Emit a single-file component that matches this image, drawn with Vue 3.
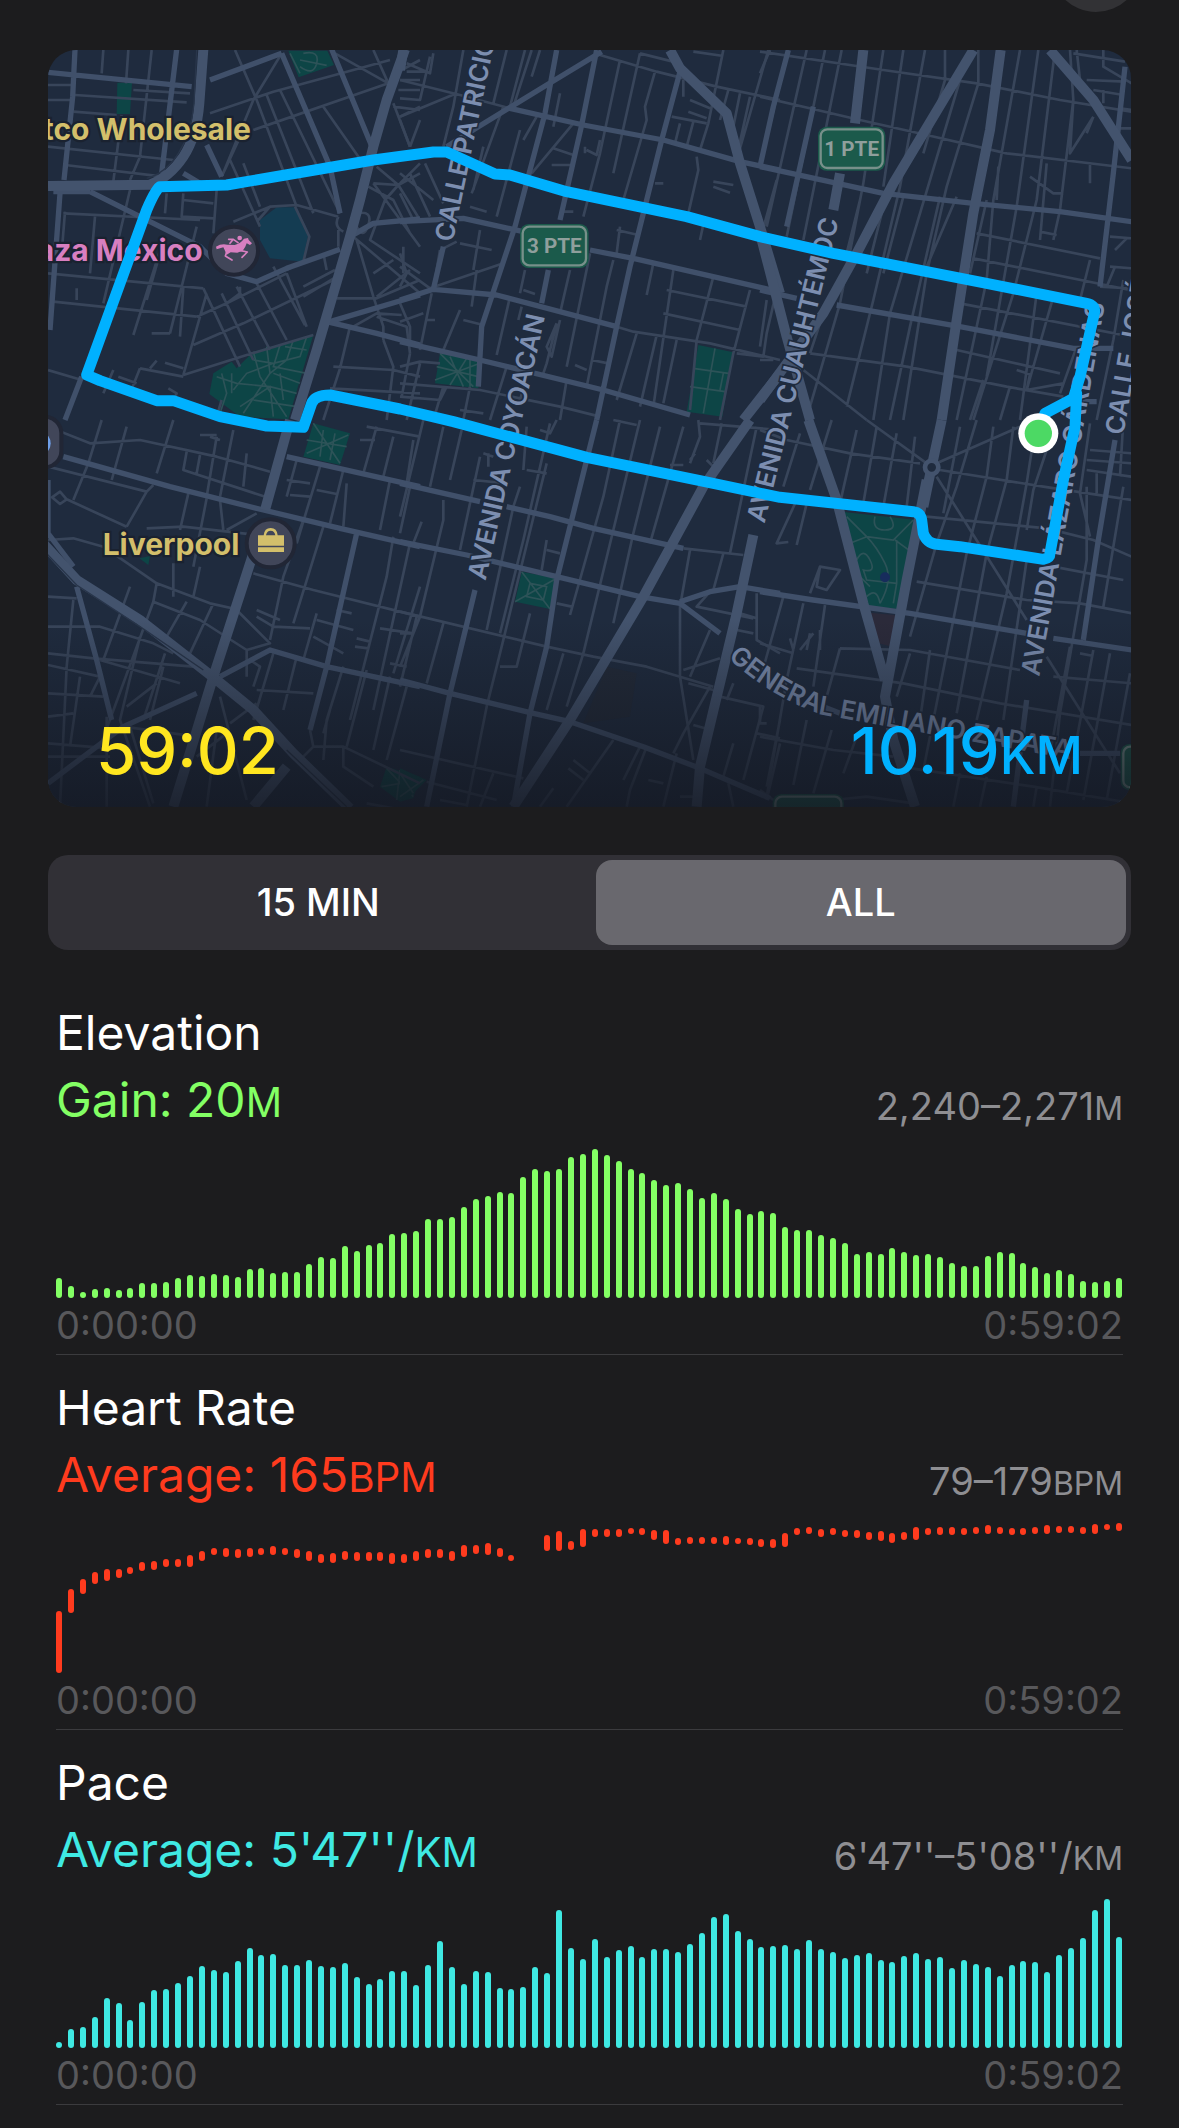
<script setup>
import { ref } from 'vue'

const spans = ['15 MIN', 'ALL']
const activeSpan = ref('ALL')

/* Map tiles: road and park outlines, each in its own tile coordinates. */
const tiles = [
  {
    x: 120, y: 120,
    parks: 'M232 128H276L270 222H230ZM745 32H862L882 75L776 112ZM520 1000L575 965L590 985L640 935L820 885L745 1138L600 1130L508 1062Z',
    paths: 'M750 40L780 100M790 40Q840 30 830 70T780 80M860 76L780 60M640 935L660 1010L740 1130M680 920L690 1000L650 1060L610 1120M720 915L700 980L800 1000M760 900L740 960L690 1000M800 890L780 950L700 970M530 1010L590 1030L690 1040L770 1060M545 1000L560 1060L540 1120M575 1000V1060M600 1100L690 1040L700 1130M640 1080L770 1100M700 970L640 960M700 1000L780 1030M580 1050L620 1000L700 970M735 920L800 930M720 1000L730 1080',
    minor: 'M190 30L185 100M265 30L258 130M335 30L300 350L270 420M245 225L220 425M24 135H95M24 180H95M105 165L440 187M100 215L230 225M280 150L450 160M24 320L400 360M75 375L370 410M585 30L650 180L770 500M510 220L700 155L1050 60M640 270L1045 130M725 40L640 180L545 410M885 40L1045 130M1000 30L1045 130M680 165L820 520M720 150L900 520M850 200L990 400M610 370L660 500M545 410L610 270M570 360L660 560M655 540L690 500L770 495L895 530M690 500L580 545M765 500L808 590L790 665L740 690M895 570V620M70 520L480 540M75 515L65 640M165 530L150 700M24 700L490 745M40 785L470 830M270 450L190 790M370 600L280 885M470 560L390 880M430 740L420 890M530 450L520 580M380 460L375 520M430 460L425 530L520 535M430 480L520 490M360 640L320 780M110 745V780M470 830L560 790L740 700M490 745L600 980M545 760L640 960M590 740L690 930M650 730L740 900M700 680L795 855M430 1005L620 945L820 885M430 1005L500 760M460 915L610 850L880 720M24 990L125 1020M300 985L430 1010M300 985L270 1060M235 1010L290 1030M335 880H390M330 985L350 962M375 968L430 985M385 1045L410 1060L400 1085M600 740V760L560 790M740 700L800 860M790 770L890 710M790 740L885 690M890 775H1010L1140 720M850 640L860 690M1000 430L1075 435L1140 400M1075 435L1035 480L990 600L1140 700M985 440L1060 480L1110 580M1000 430L1140 620M940 590L1140 760M950 600L1000 770L1030 860L1030 900M1060 660L1000 700M1110 690L1010 770M1010 380L1075 435L1140 540M1090 620V700M1140 60L1085 90M1080 120H1140M1075 150H1140M1060 200L1140 210M1060 190L1110 320M1110 320L1140 240M1140 200L1080 230M930 860L900 985L850 1140M1030 900L1060 980L1040 1140M1110 940L1085 1070M880 980L1060 990L1140 1010M870 1045L1140 1060M1010 830L1100 860L1110 940M940 860L1010 820L1085 825M895 530Q880 560 910 575M950 520Q1000 510 985 555T950 560M545 1080L530 1130M220 990L190 1060',
    street: 'M105 28L98 170L72 420M24 97L455 140M410 28L365 400M60 460L30 870M40 455H150M150 455L480 620L560 700L650 725L740 685L900 628M875 28L1000 330M725 40L870 380L900 520M510 120L725 40M930 590L1000 550L1140 537M870 845L1140 765M860 845L1010 880L1140 915M500 315L545 410M430 400L480 430M125 1010L75 1140',
    avenue: 'M490 28L478 190Q470 290 430 350T330 434L24 438M1095 28L1040 180L1000 320L960 480L930 590L880 760L830 930L765 1140'
  },
  {
    x: 1200, y: 120,
    parks: 'M120 940L240 960L235 1045L105 1030ZM895 915L1000 937L967 1130L860 1115Z',
    paths: 'M120 940L220 1040M105 1020L240 970M150 950L190 1040M200 955L150 1035M110 980L235 1010M210 960V1040M945 925L910 1120M880 985L985 1000M870 1040L975 1055M970 1000L960 1050',
    minor: 'M190 30L160 200L130 320M320 30L280 190M375 30L330 200M420 30L395 110M480 160L460 260M410 230L370 300M360 270L290 530M310 200L215 460M250 320L220 450M520 250L395 400M660 60L600 340L550 530M720 40L640 400M765 95L735 200L740 240L670 480M890 350L895 390L865 520M970 30L925 250L900 330M915 530L900 600M1105 30L1010 360M1140 130L1080 380M600 45L770 95L950 140L1140 180M720 40L840 70M880 35L970 48M850 120V170M815 230L920 250M870 180L930 205M865 215L920 235M840 250L825 310M880 245L860 320M940 425L1000 435M940 440L990 458M765 430H790M460 325L520 345M455 375H510M560 330L590 345L600 300M555 340V320M490 515H520M985 150L960 240M1020 160L1000 260M1050 170L1010 350M20 70L90 100L100 40M20 95H80M0 120L180 165L330 205M0 230L170 160M0 240L30 320M0 175L60 180L90 50M0 400L100 480M0 430L60 370M75 370L130 490M30 400L90 530M0 460L40 540M210 500L260 515M120 630L100 748M0 680L90 745L310 670M0 640L20 700L0 740M0 790L30 860V905M0 845L70 820M230 690L215 800M220 690L240 570M180 810L130 930M80 840H105M95 760L60 930M190 840L250 855M180 610L275 630M130 625L170 605M330 770L290 945M375 690L360 760M370 750L405 762M365 800L355 840M510 690L480 820M470 850L440 970L430 1000M480 840L455 950L440 920L470 850M570 640L500 980M640 660L620 740L560 1040M760 670L740 765M820 690L760 1100M940 710L890 900L870 1110M1050 750L1000 940L960 1140M800 750L1040 800M790 820L1020 870M1010 940L1090 950L1100 880L1130 750M650 860L700 875L930 910L1140 960M710 880L650 1080M770 885L720 1100M830 900L790 1090M650 570L715 585M575 960L625 970M525 975L560 990M0 1030L240 1050L480 1100L600 1130M60 970L20 1140M0 980L60 965L120 970M0 1070L120 1080L140 1040M130 1040L100 1140M210 1040L190 1140M320 980L270 1140M180 1110L250 1120M380 1010L360 1080M500 1020L480 1140M660 560L650 640M395 30L340 200',
    street: 'M590 30L545 255L480 540M445 690L425 790M840 95L785 300L690 680L650 860L590 1140M470 30L435 220L345 560L245 860L235 1040M605 35L440 135L235 260L140 320M0 545L190 535L370 575M570 630L700 655L1115 750M330 205L550 255L790 300L1020 365L1140 390M0 780L100 748L290 765L650 860M0 905L240 960L610 1050L870 1125M130 620L100 748',
    avenue: 'M810 30L840 85L980 220L1020 370L1080 560L1140 760M1140 1000L1030 1140M10 30L0 90'
  },
  {
    x: 2280, y: 120,
    parks: '',
    paths: '',
    minor: 'M0 35L370 90L650 130L900 180L1115 215M0 170L300 240L500 285L740 340L1115 385M0 100L30 30M140 30L20 560M195 30L80 590M245 30L130 600M370 30L310 430L240 790L150 1100M430 30L370 440M495 30L420 440L340 780L260 1100M555 30V120L490 340M600 120L480 520L390 820L340 1140M655 30V130L560 440L500 700L430 1140M780 30L700 480L680 720L590 1140M835 30L770 500L680 1010M885 30L830 480L760 760L640 1140M940 180L930 340L1000 230M1000 230L980 280M930 30L940 180L900 510L880 600M590 470L500 680M540 470L450 860L390 1140M430 470L370 700M370 500L320 700M300 480L260 640M1030 30V80L1115 130M940 40L1095 65M980 120L1095 125M1000 150L1090 165M1030 150V190M1080 265H1115M1080 205L1115 210M715 380L710 480M810 410L880 460H910M860 370L840 600M840 575L890 585M990 370V430M650 580L1020 655M640 655L1110 750M630 700L680 480M1050 590L1115 595M1100 595L1065 630M1050 680L1115 685M1065 680L1040 740M1020 740L1115 745M600 790L1115 890M590 930L900 1000M830 760L780 1140M880 770L800 1050M990 660L960 780M770 990L810 1003L800 1050M800 1050L910 1030M950 920L900 1060M590 1010L740 1040L910 1070M440 980L590 1010M150 940L440 980M130 990L320 1140M190 820L150 940M20 780L0 920M0 960H40M750 1040L720 1140M670 1020L630 1140M1060 900L1010 1140M1090 720L1060 900M950 30L960 120M0 600L50 420',
    street: 'M0 380L370 460L640 490L900 515L1115 545M230 795L600 860L940 925H1060M1095 80L1060 400L1020 740M85 30L40 200L0 380M160 200L80 560M0 750L110 775M960 1085H1010',
    avenue: 'M310 30L285 250M240 400L220 510M640 30L400 430L290 640L190 820L0 1080M722 30L690 270L640 520L590 840L545 1140M870 30L1000 180L1115 360M0 580L80 890L150 1140'
  },
  {
    x: 120, y: 1260,
    parks: 'M820 10L930 40L900 135L790 110ZM1040 1040L1140 1070L1120 1135L1080 1145L1020 1100ZM298 415L330 408L325 435Z',
    paths: 'M820 10L900 130M800 100L925 45M850 30L840 110M885 40L870 120M800 60L920 80M1040 1045L1120 1130M1025 1100L1140 1080M1080 1050L1070 1140',
    minor: 'M185 0L145 130L100 240M260 20L215 180M400 0L350 160M530 50L500 230M580 30L540 230M540 60L510 50M480 45H530M620 100L610 200M24 20L150 70L300 60L530 110L690 155M440 95L430 150L690 235M480 105L470 160M24 140L320 215L260 320M320 215L340 195M36 232L60 215L80 238L60 252ZM80 238L260 320M320 325L430 320L650 345M24 360L100 355L190 380L350 490L510 550L600 570M445 220L420 330M500 235L460 440M400 430V530M540 240L550 330M650 280L560 330M350 490L340 545L180 980M440 545L380 650M340 545L480 600L620 690M520 550L450 700M480 440L460 530M270 500L190 720M100 540L80 740L60 1160M24 530L110 535M24 620H180L340 670L400 700M24 700L160 715L460 740M24 735L180 770L150 830M180 720L420 790M300 650L240 900L330 1160M375 700L310 900M370 740L330 900M24 820L190 830M24 890L100 880M24 970L210 985M24 1010H210M120 770L90 980M200 890V1160M270 920L340 1150M250 920L470 950M540 830L620 1140M530 930L500 1160M570 910L650 850M350 790L260 860M470 1010L560 940M770 120L740 230M840 140L770 370M910 150L870 310M830 210L890 222M750 225L810 230M740 180L810 190M980 20L1140 50M960 60H1005M1010 20L970 160M1060 50L1030 170M1120 60L1100 190M920 190L910 320M1050 180L1020 330M1110 200L1080 340M790 300L730 470L690 660M850 320L760 610M1060 350L1040 470L930 900M1110 370L1000 870M1140 500L1060 760M640 460L820 510L1140 590M590 570L690 670L620 690V770M650 590L700 620L810 625M830 600L940 630M650 570L720 600M830 580L790 720M820 650L910 700M890 570L935 580M950 655L990 665M945 680L985 685M1020 625L1120 640M1050 730L1100 740M650 810L820 820M700 700L640 900M770 710L730 870M910 740L860 900L850 1020M980 750L920 980M1050 770L1000 990M1100 800L1040 1020M820 980L910 980L1140 1090M910 980V1040L1000 1100M810 930L820 980L780 1020M870 870L850 940M630 720L660 740L640 800M980 1150L1060 1165',
    street: 'M24 180V340L100 440M70 110L390 200L670 270L900 325L1140 380M540 770L690 690L860 740L1140 800M110 500L170 720L215 900M24 1090L250 920L470 820M950 340L860 740L810 930M740 110L1140 200',
    avenue: 'M750 0L675 270M640 400L520 770L400 1160M0 360L110 480L300 600L530 780L640 870L760 1000L930 1165M640 1160L740 1040'
  },
  {
    x: 1200, y: 1260,
    parks: 'M365 455L470 475L450 567L345 545ZM0 1045L80 1080L20 1140H0Z',
    paths: 'M365 455L450 567M470 475L345 545M390 490L440 500L430 540L380 530ZM0 1130L70 1080M0 1060L40 1120',
    minor: 'M70 0L0 290M130 20L90 200M185 30L150 180M130 240V300L60 590L0 740M240 110L180 390M265 100V140M250 100L280 110M440 130L300 700L260 860L200 1160M360 200L340 260L260 630M450 10L370 360L300 640M380 150L440 160M220 180L320 190M380 20L370 150M420 30L450 40L470 0M440 360L425 450M440 390L480 400M660 0L610 230L510 585M720 0L640 330L550 700L500 860M780 20L700 340L640 610M850 20L750 370M895 0L900 50L870 130M965 10L940 130M1070 20L990 400M640 0L710 15M870 120L885 100M920 120L940 140M810 135H850M850 385L1030 405M870 390L840 560V770L880 1020M970 400L940 510M470 550L515 560M0 575L440 680L580 710L740 740L940 800M130 610L80 790M50 590L0 800M0 640H40M65 305L40 370M490 700L440 870M300 740H350L390 580M0 990L370 1075M80 1085L290 1140M280 1060L240 1160M120 1140L200 1155M640 960L500 1160M720 980L670 1080M740 980L690 1110L680 1160M505 1045L550 1080M520 1020L570 1060M460 1105L420 1160M745 1080L790 1090M830 1000L790 1160M960 830L1090 860L1030 1080M930 800L850 940L820 1000M880 915L915 925M865 790L940 810M1070 940L1140 955M1075 910H1100M1000 970L970 1070M985 1090L1000 1160M1140 970L1100 1140M930 515L890 560L1060 595M930 630L870 770M850 750L960 715M1020 580L1070 595M1010 630L1060 640M1070 520V660L1140 700M840 1130H890M1000 790L980 840M900 10L1140 30',
    street: 'M590 0L560 120L470 480L440 680L390 880L340 1160M0 190L240 245M320 260L450 290L580 325L850 385M0 365L200 405L470 470L720 530L840 550L960 640M840 545L930 515L1020 500L1140 520M225 510L150 820L80 1160M0 780L150 820L400 880L510 905L730 980L900 1045L1110 1135',
    avenue: 'M1050 0L910 200L730 530L510 900L340 1160M1060 345L1010 580L900 1040L890 1160'
  },
  {
    x: 2280, y: 1260,
    parks: 'M245 275L470 300L412 567L320 557Z',
    paths: 'M260 290L320 350L400 360L460 300M320 350L270 370M345 290Q335 330 375 330T390 290M320 350Q350 380 375 430T360 550M290 420Q310 380 330 420T310 450L320 480L410 490M410 360V490L400 550M320 530Q350 500 360 550M405 360L460 400M300 470L330 500',
    minor: 'M0 30L80 60L270 100L480 130M540 150L850 200L1115 240M320 0L500 130M530 130L780 20M530 170L700 440L800 600M860 710L1080 1060M120 40L70 200M215 0L150 210M290 30L240 250M350 20L310 250M410 40L370 260M465 50L440 260M110 240L50 370L85 366M145 230L110 375M180 440L240 450L200 510L170 500ZM180 440L150 520M600 20L550 280M650 0L590 200L530 370L450 650M700 20L680 170L620 400L530 850L490 1050M760 20L740 180L680 400L590 880M820 60L800 190L740 520L650 900M870 60L820 210L800 330M500 290L860 325L1000 360L1115 410M470 485L800 540L960 550L1115 580M110 745L430 790L720 850L1115 915M240 685L450 690L780 750M70 530L0 780M130 550L80 780L20 1130M195 555L160 800M240 685L200 830M160 640L120 690M180 630V690M150 640L140 690M90 655L100 690M0 670L100 700M450 700L410 830M510 690L480 900M800 420L730 900M980 200V420L900 880M990 10L960 220L990 350M990 90L1115 100M980 120L1115 130M980 150L1115 170M1090 0L1080 170M1010 160V220M1090 200L1030 560M930 680L870 1000M1000 690L920 1120M1050 700L970 1140M1110 760L1040 1140M880 770L1115 790M960 700L1000 708M420 1040L820 1100L1115 1150M0 950L220 990L400 1010M60 900L20 1100M140 900L100 1095M215 930L160 1120M290 950L250 1060M600 1060L580 1160M680 1070L660 1160M830 1100L820 1160M220 1140L320 1130L460 1150M330 1000L320 1060M880 440L1090 480M900 880L870 1160M0 860V910M0 1110L40 1140',
    street: 'M0 515L160 540L450 580L800 640M880 655L1115 690M1065 60L1015 360L970 660M800 840L760 1160M960 1000H1080M190 860L240 880',
    avenue: 'M145 0L230 240L310 550L375 780M545 0L515 140L490 260M500 180L440 480L375 830L400 960L465 1160'
  }
]

const roadLabels = [
  { id: 'patricio', d: 'M1358 728Q1400 520 1520 -40', text: 'CALLE PATRICIO', at: 'start' },
  { id: 'coyoacan', d: 'M1450 1772L1642 920', text: 'AVENIDA COYOACÁN', at: 'middle' },
  { id: 'cuauhtemoc', d: 'M2285 1607L2525 625', text: 'AVENIDA CUAUHTÉMOC', at: 'middle' },
  { id: 'cardenas', d: 'M3108 2087L3325 855', text: 'AVENIDA LÁZARO CÁRDENAS', at: 'middle' },
  { id: 'jose', d: 'M3370 1307L3500 560', text: 'CALLE JOSÉ', at: 'start' },
  { id: 'zapata', d: 'M2155 1945Q2300 2090 2470 2145L3250 2284', text: 'GENERAL EMILIANO ZAPATA', at: 'middle' }
]

/* Each bar is [height, distance above the baseline] in pixels; null is a gap in the samples. */
const fromZero = (heights) => heights.map((h) => [h, 0])

const charts = [
  {
    name: 'Elevation', tone: 'green', summary: 'Gain: 20', unit: 'M', range: '2,240–2,271',
    bars: fromZero([
      20, 12, 6, 9, 10, 8, 10, 15, 15, 16, 20, 23, 22, 24, 23, 21, 29, 30, 25, 26, 26, 34, 41, 40, 52, 47, 53, 55, 64, 65,
      67, 79, 79, 81, 91, 99, 102, 106, 105, 121, 129, 127, 129, 141, 144, 149, 143, 137, 129, 125, 118, 113, 115, 109, 100, 105, 99, 89, 84, 87,
      85, 71, 68, 68, 63, 60, 55, 44, 46, 44, 50, 46, 43, 44, 41, 35, 32, 32, 42, 46, 45, 35, 31, 25, 28, 24, 17, 16, 17, 20
    ])
  },
  {
    name: 'Heart Rate', tone: 'red', summary: 'Average: 165', unit: 'BPM', range: '79–179',
    bars: [
      [62, 0], [24, 60], [15, 79], [12, 89], [12, 92], [9, 95], [7, 99], [9, 102], [9, 103], [8, 106],
      [8, 106], [12, 106], [10, 112], [7, 118], [9, 116], [9, 115], [9, 116], [7, 118], [9, 118], [7, 118],
      [9, 115], [10, 112], [9, 110], [10, 110], [9, 113], [9, 112], [9, 112], [9, 112], [11, 109], [9, 110],
      [10, 112], [9, 115], [9, 115], [10, 112], [12, 116], [9, 119], [12, 118], [9, 116], [6, 112], null,
      null, [16, 122], [20, 122], [9, 123], [18, 126], [8, 136], [8, 136], [8, 136], [6, 139], [7, 138],
      [10, 133], [14, 129], [7, 128], [7, 129], [7, 129], [7, 129], [9, 128], [6, 129], [7, 128], [8, 126],
      [9, 125], [14, 126], [7, 138], [7, 139], [8, 136], [7, 138], [7, 136], [8, 135], [8, 133], [10, 132],
      [10, 130], [8, 133], [13, 133], [7, 138], [8, 138], [8, 138], [7, 138], [7, 139], [9, 139], [7, 139],
      [7, 138], [7, 138], [7, 139], [9, 139], [7, 140], [7, 140], [7, 139], [10, 139], [6, 143], [8, 142]
    ]
  },
  {
    name: 'Pace', tone: 'cyan', summary: "Average: 5'47''/", unit: 'KM', range: "6'47''–5'08''/",
    bars: fromZero([
      6, 19, 21, 31, 50, 45, 28, 46, 58, 59, 65, 72, 82, 78, 76, 87, 100, 93, 94, 83, 83, 88, 82, 81, 85, 71, 64, 69, 77, 77,
      63, 83, 107, 81, 64, 77, 76, 60, 59, 61, 81, 75, 138, 100, 89, 109, 91, 98, 102, 91, 99, 99, 96, 104, 115, 131, 134, 117, 109, 101,
      102, 103, 99, 108, 99, 96, 90, 93, 95, 88, 86, 92, 95, 89, 91, 80, 88, 84, 81, 72, 83, 87, 86, 76, 93, 100, 110, 138, 149, 111
    ])
  }
]
</script>

<template>
  <div class="page">
    <header class="top">
      <button class="close" type="button" aria-label="Close"></button>
    </header>

    <main class="content">
      <section class="map" aria-label="Route map">
        <svg class="map-art" viewBox="144 150 3249 2271" aria-hidden="true">
          <g v-for="t in tiles" :key="`${t.x}-${t.y}`" :transform="`translate(${t.x} ${t.y})`">
            <path class="park" :d="t.parks" />
            <path class="trail" :d="t.paths" />
          </g>
          <path class="pond" d="M780 660L830 622H890L926 698L908 785L810 775L780 720Z" />
          <circle class="lake" cx="2655" cy="1732" r="15" />
          <path class="plaza" d="M2610 1838L2690 1846L2676 1940L2636 1930Z" />
          <path class="plaza faint" d="M1820 2000L1910 2020L1890 2150L1750 2170Z" />
          <g v-for="t in tiles" :key="`r${t.x}-${t.y}`" :transform="`translate(${t.x} ${t.y})`">
            <path class="road minor" :d="t.minor" />
          </g>
          <g v-for="t in tiles" :key="`s${t.x}-${t.y}`" :transform="`translate(${t.x} ${t.y})`">
            <path class="road street" :d="t.street" />
            <path class="road avenue" :d="t.avenue" />
          </g>
          <path class="road-edge" d="M590 150L582 310Q574 400 535 460T440 535M120 1640L230 1755L420 1880L610 2010M860 2250L1040 2420" />
          <circle class="roundabout" cx="2795" cy="1402" r="20" />

          <g class="road-label">
            <template v-for="l in roadLabels" :key="l.id">
              <path :id="l.id" :d="l.d" fill="none" stroke="none" />
              <text :text-anchor="l.at"><textPath :href="`#${l.id}`" :startOffset="l.at === 'middle' ? '50%' : '0%'">{{ l.text }}</textPath></text>
            </template>
          </g>

          <g class="shield">
            <rect x="1560" y="672" width="206" height="132" rx="26" />
            <rect class="shield-line" x="1568" y="680" width="190" height="116" rx="20" />
            <text x="1663" y="760">3 PTE</text>
            <rect x="2454" y="380" width="202" height="132" rx="26" />
            <rect class="shield-line" x="2462" y="388" width="186" height="116" rx="20" />
            <text x="2555" y="468">1 PTE</text>
            <rect x="2318" y="2382" width="214" height="132" rx="26" />
            <rect class="shield-line" x="2326" y="2390" width="198" height="116" rx="20" />
            <rect x="3362" y="2232" width="206" height="138" rx="26" />
            <rect class="shield-line" x="3370" y="2240" width="190" height="122" rx="20" />
          </g>

          <g class="place">
            <text class="gold" x="753" y="420" text-anchor="end">Costco Wholesale</text>
            <text class="pink" x="608" y="782" text-anchor="end">Plaza Mexico</text>
            <text class="gold" x="308" y="1665">Liverpool</text>
          </g>

          <g>
            <circle class="pin" cx="702" cy="752" r="72" />
            <path class="pink" d="M648 740Q664 730 682 734L704 735Q722 730 732 716L744 714L746 720L756 730L750 735L740 730Q736 744 728 752L712 758L692 757L680 764L674 750L670 742L650 748Z" />
            <path class="horse-limbs" d="M680 756L676 768L696 780M722 752L742 756L726 772M690 730L700 718L686 718M700 718L714 728" />
            <circle class="pink" cx="719" cy="714" r="7" />
            <circle class="pin" cx="812" cy="1630" r="72" />
            <path class="gold" d="M774 1606H791Q793 1584 812 1584T833 1606H852V1637H774ZM798 1606H826Q824 1592 812 1592T798 1606ZM774 1642H852V1656H774Z" fill-rule="evenodd" />
            <rect class="pin" x="24" y="1250" width="160" height="152" rx="50" />
            <ellipse class="blue" cx="132" cy="1330" rx="20" ry="28" />
          </g>

          <rect x="144" y="1860" width="3249" height="561" fill="url(#shade)" />
          <linearGradient id="shade" x1="0" y1="0" x2="0" y2="1">
            <stop offset="0" stop-color="#141822" stop-opacity="0" />
            <stop offset="1" stop-color="#141822" stop-opacity="0.8" />
          </linearGradient>

          <path class="route" d="M3115 1300L3135 1240L3220 1195L3240 1130L3284 935Q3284 915 3260 910L2960 850L2500 760L2280 710L2060 650L1700 575L1530 525L1485 522L1340 456H1300L1120 480L680 555L480 560Q468 565 440 630L260 1125L300 1142L470 1202H520L660 1250L800 1278L910 1282L935 1210Q945 1185 990 1185L1200 1227L1360 1265L1760 1372L2100 1442L2340 1492L2740 1535Q2762 1538 2765 1560L2770 1600Q2780 1630 2810 1633L2880 1640L3130 1678Q3150 1675 3150 1660L3190 1440L3225 1280L3230 1180" />
          <circle cx="3115" cy="1300" r="60" fill="#fff" />
          <circle cx="3115" cy="1300" r="41" fill="#4cd964" />
        </svg>
        <div class="totals">
          <span class="duration">59:02</span>
          <span class="distance">10.19<span class="caps">KM</span></span>
        </div>
      </section>

      <div class="segments" role="group" aria-label="Time span">
        <button
          v-for="s in spans"
          :key="s"
          type="button"
          class="segment"
          :class="{ active: s === activeSpan }"
          :aria-pressed="s === activeSpan"
          @click="activeSpan = s"
        >{{ s }}</button>
      </div>

      <section v-for="c in charts" :key="c.name" class="metric" :class="c.tone">
        <h2 class="name">{{ c.name }}</h2>
        <div class="figures">
          <span class="summary">{{ c.summary }}<span class="caps">{{ c.unit }}</span></span>
          <span class="range">{{ c.range }}<span class="caps">{{ c.unit }}</span></span>
        </div>
        <div class="bars">
          <span
            v-for="(b, i) in c.bars"
            :key="i"
            class="bar"
            :style="b ? { height: `${b[0]}px`, marginBottom: `${b[1]}px` } : { height: '0px' }"
          ></span>
        </div>
        <div class="times"><span>0:00:00</span><span>0:59:02</span></div>
      </section>
    </main>
  </div>
</template>

<style>
body {
  margin: 0;
  background: #1c1c1e;
}
</style>

<style scoped>
.page {
  background: #1c1c1e;
  color: #fff;
  font-family: Inter, "Liberation Sans", sans-serif;
  padding-bottom: 22px;
}
.top {
  display: flex;
  justify-content: flex-end;
  align-items: flex-end;
  height: 12px;
  margin-bottom: 38px;
  padding: 0 38px;
  overflow: hidden;
}
.close {
  flex: none;
  width: 90px;
  height: 90px;
  border: 0;
  border-radius: 50%;
  background: #323235;
}
.content {
  padding: 0 48px;
}
.map {
  position: relative;
  border-radius: 28px;
  overflow: hidden;
  background: #1f2b3e;
}
.map-art {
  display: block;
  width: 100%;
}
.park { fill: #0d4546; }
.pond { fill: #143c52; }
.lake { fill: #172c5c; }
.plaza { fill: #2b2a3a; }
.plaza.faint { fill: #222a38; }
.trail { fill: none; stroke: #2d5358; stroke-width: 5; }
.road { fill: none; stroke-linejoin: round; }
.minor { stroke: #38455a; stroke-width: 8; }
.street { stroke: #40506a; stroke-width: 16; }
.avenue { stroke: #43536d; stroke-width: 30; }
.road-edge { fill: none; stroke: #28354a; stroke-width: 4; }
.roundabout { fill: #1f2b3e; stroke: #43536d; stroke-width: 14; }
.road-label text {
  font-size: 78px;
  font-weight: 600;
  fill: #7c8eb0;
  stroke: #1f2b3e;
  stroke-width: 10;
  paint-order: stroke;
}
.shield rect { fill: #1b5a4b; }
.shield .shield-line { fill: none; stroke: #77908a; stroke-width: 7; }
.shield text {
  font-family: Roboto, "Liberation Sans", sans-serif;
  font-size: 62px;
  font-weight: 700;
  fill: #8f9f9c;
  text-anchor: middle;
}
.place text {
  font-size: 90px;
  font-weight: 700;
  stroke: #1a2230;
  stroke-width: 14;
  paint-order: stroke;
}
.gold { fill: #d3bf6b; }
.pink { fill: #d87fc0; }
.blue { fill: #6fa0ea; }
.horse-limbs {
  fill: none;
  stroke: #d87fc0;
  stroke-width: 5;
  stroke-linejoin: round;
  stroke-linecap: round;
}
.pin { fill: #414659; stroke: #212635; stroke-width: 12; }
.route {
  fill: none;
  stroke: #00b1ff;
  stroke-width: 33;
  stroke-linejoin: round;
  stroke-linecap: round;
}
.totals {
  position: absolute;
  inset: auto 0 0;
  display: flex;
  justify-content: space-between;
  padding: 0 48px 16px;
  font-size: 65px;
  line-height: 80px;
  font-weight: 500;
}
.duration { color: #ffe620; }
.distance { color: #00b1ff; }
.caps { font-size: 80%; line-height: 1; }
.segments {
  display: flex;
  gap: 12px;
  margin: 48px 0 30px;
  padding: 5px;
  border-radius: 20px;
  background: #313036;
}
.segment {
  flex: 1;
  height: 85px;
  padding: 0;
  border: 0;
  border-radius: 16px;
  background: none;
  color: #fff;
  font: 500 38px/85px Inter, "Liberation Sans", sans-serif;
}
.segment.active { background: #69686e; }
.metric {
  margin: 0 8px;
  padding: 19px 0 2px;
  border-bottom: 1px solid #3b3b3e;
}
.name {
  margin: 0;
  font-size: 48px;
  line-height: 67px;
  font-weight: 400;
}
.figures {
  display: flex;
  justify-content: space-between;
  align-items: flex-end;
  height: 67px;
}
.summary {
  font-size: 48px;
  line-height: 67px;
}
.range {
  font-size: 38px;
  line-height: 54px;
  color: #8e8e92;
}
.figures .caps { font-size: 84%; }
.bars {
  display: flex;
  justify-content: space-between;
  align-items: flex-end;
  height: 149px;
  margin-top: 16px;
}
.bar {
  width: 6px;
  border-radius: 3px;
  background: currentColor;
}
.green { color: #83ff64; }
.red { color: #ff3b1e; }
.cyan { color: #3fe9e3; }
.name { color: #fff; }
.times {
  display: flex;
  justify-content: space-between;
  color: #58585b;
  font-size: 38px;
  line-height: 54px;
}
</style>
